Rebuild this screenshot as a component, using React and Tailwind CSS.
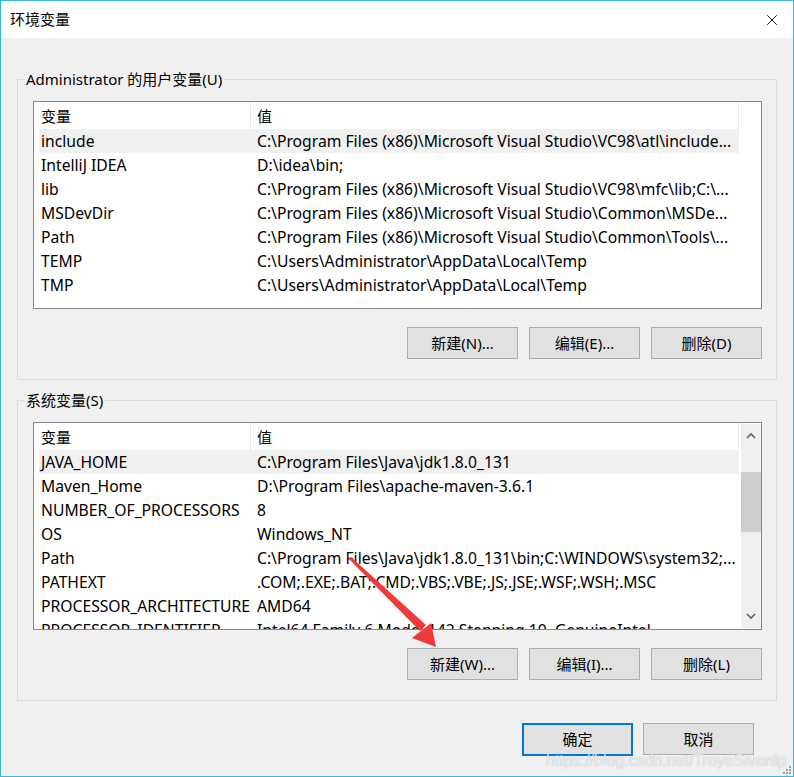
import { X } from 'lucide-react'

const userVars = [
  ['include', 'C:\\Program Files (x86)\\Microsoft Visual Studio\\VC98\\atl\\include...'],
  ['IntelliJ IDEA', 'D:\\idea\\bin;'],
  ['lib', 'C:\\Program Files (x86)\\Microsoft Visual Studio\\VC98\\mfc\\lib;C:\\...'],
  ['MSDevDir', 'C:\\Program Files (x86)\\Microsoft Visual Studio\\Common\\MSDe...'],
  ['Path', 'C:\\Program Files (x86)\\Microsoft Visual Studio\\Common\\Tools\\...'],
  ['TEMP', 'C:\\Users\\Administrator\\AppData\\Local\\Temp'],
  ['TMP', 'C:\\Users\\Administrator\\AppData\\Local\\Temp'],
]

const sysVars = [
  ['JAVA_HOME', 'C:\\Program Files\\Java\\jdk1.8.0_131'],
  ['Maven_Home', 'D:\\Program Files\\apache-maven-3.6.1'],
  ['NUMBER_OF_PROCESSORS', '8'],
  ['OS', 'Windows_NT'],
  ['Path', 'C:\\Program Files\\Java\\jdk1.8.0_131\\bin;C:\\WINDOWS\\system32;...'],
  ['PATHEXT', '.COM;.EXE;.BAT;.CMD;.VBS;.VBE;.JS;.JSE;.WSF;.WSH;.MSC'],
  ['PROCESSOR_ARCHITECTURE', 'AMD64'],
  ['PROCESSOR_IDENTIFIER', 'Intel64 Family 6 Model 142 Stepping 10, GenuineIntel'],
]

function Btn({ children, primary }) {
  return (
    <button
      className={`w-[111px] bg-[#e1e1e1] text-black text-[15px] flex items-center justify-center ${
        primary ? 'h-[33px] border-2 border-[#0078d7]' : 'h-[32px] border border-[#adadad]'
      }`}
    >
      {children}
    </button>
  )
}

function VarList({ rows, scroll }) {
  return (
    <div className="ml-[15px] w-[729px] h-[208px] border border-[#828790] bg-white flex overflow-hidden">
      <div className="w-[705px] pl-[5px] flex flex-col">
        <div className="h-[27px] flex items-center shrink-0">
          <div className="w-[212px] h-full pl-[2px] pt-[2px] flex items-center border-r border-[#e5e5e5]">变量</div>
          <div className="flex-1 h-full pl-[6px] pt-[2px] flex items-center border-r border-[#e5e5e5]">值</div>
        </div>
        {rows.map(([name, value], i) => (
          <div
            key={i}
            className={`h-[24px] flex items-center shrink-0 text-[15.7px] ${i === 0 ? 'bg-[#f0f0f0]' : ''}`}
          >
            <div className="w-[212px] pl-[2px] pt-[1px] whitespace-nowrap overflow-hidden">{name}</div>
            <div className="w-[487px] pl-[6px] pt-[1px] whitespace-nowrap overflow-hidden">{value}</div>
          </div>
        ))}
      </div>
      {scroll && (
        <div className="ml-[2px] mt-[1px] mb-[1px] w-[20px] bg-[#f0f0f0] flex flex-col items-center">
          <svg width="12" height="20" viewBox="0 0 12 20" className="mt-[1px]">
            <path d="M2 13 L6 9 L10 13" fill="none" stroke="#606060" strokeWidth="1.6" />
          </svg>
          <div className="mt-[27px] w-[20px] h-[60px] bg-[#cdcdcd]" />
          <div className="flex-1" />
          <svg width="12" height="20" viewBox="0 0 12 20" className="mb-[1px]">
            <path d="M2 7 L6 11 L10 7" fill="none" stroke="#606060" strokeWidth="1.6" />
          </svg>
        </div>
      )}
    </div>
  )
}

function Group({ title, rows, scroll, buttons, className }) {
  return (
    <fieldset className={`mx-[16px] border border-[#dcdcdc] ${className}`}>
      <legend className="ml-[6px] px-[2px] leading-[20px]">{title}</legend>
      <div className="pt-[12px] pb-[20px]">
        <VarList rows={rows} scroll={scroll} />
        <div className="mt-[18px] pr-[14px] flex justify-end gap-[11px]">
          {buttons.map((b) => (
            <Btn key={b}>{b}</Btn>
          ))}
        </div>
      </div>
    </fieldset>
  )
}

export default function App() {
  return (
    <div
      className="relative w-[794px] h-[777px] border border-[#3fb6d8] bg-[#f0f0f0] flex flex-col text-[15px] text-black overflow-hidden"
      style={{ fontFamily: '"Noto Sans", "Noto Sans CJK SC", sans-serif' }}
    >
      <div className="h-[37px] bg-white flex items-center justify-between pl-[9px] pr-[12px] shrink-0">
        <span>环境变量</span>
        <X className="w-[18px] h-[18px]" strokeWidth={1.2} />
      </div>

      <Group
        className="mt-[31px]"
        title="Administrator 的用户变量(U)"
        rows={userVars}
        buttons={['新建(N)...', '编辑(E)...', '删除(D)']}
      />

      <Group
        className="mt-[10px]"
        title="系统变量(S)"
        rows={sysVars}
        scroll
        buttons={['新建(W)...', '编辑(I)...', '删除(L)']}
      />

      <div className="mt-[22px] pr-[39px] flex justify-end gap-[10px]">
        <Btn primary>确定</Btn>
        <Btn>取消</Btn>
      </div>

      {/* red annotation arrow */}
      <svg className="absolute left-[340px] top-[550px]" width="110" height="110" viewBox="0 0 110 110">
        <polygon points="7,7 10,6 85,74 79,80" fill="#ee3a3a" />
        <polygon points="71,87 90,72 95,96" fill="#ee3a3a" />
      </svg>

      {/* watermark */}
      <div className="absolute left-[545px] top-[748px] text-[16px] text-white/80 [text-shadow:0_0_1px_rgba(0,0,0,0.35)] font-['Liberation_Sans',sans-serif]">
        https://blog.csdn.net/TroyeSivanlp
      </div>

      {/* resize grip */}
      <div className="absolute right-[2px] bottom-[2px] grid grid-cols-3 gap-[1px]">
        <span className="w-[2px] h-[2px]" />
        <span className="w-[2px] h-[2px]" />
        <span className="w-[2px] h-[2px] bg-[#a0a0a0]" />
        <span className="w-[2px] h-[2px]" />
        <span className="w-[2px] h-[2px] bg-[#a0a0a0]" />
        <span className="w-[2px] h-[2px] bg-[#a0a0a0]" />
        <span className="w-[2px] h-[2px] bg-[#a0a0a0]" />
        <span className="w-[2px] h-[2px] bg-[#a0a0a0]" />
        <span className="w-[2px] h-[2px] bg-[#a0a0a0]" />
      </div>
    </div>
  )
}
